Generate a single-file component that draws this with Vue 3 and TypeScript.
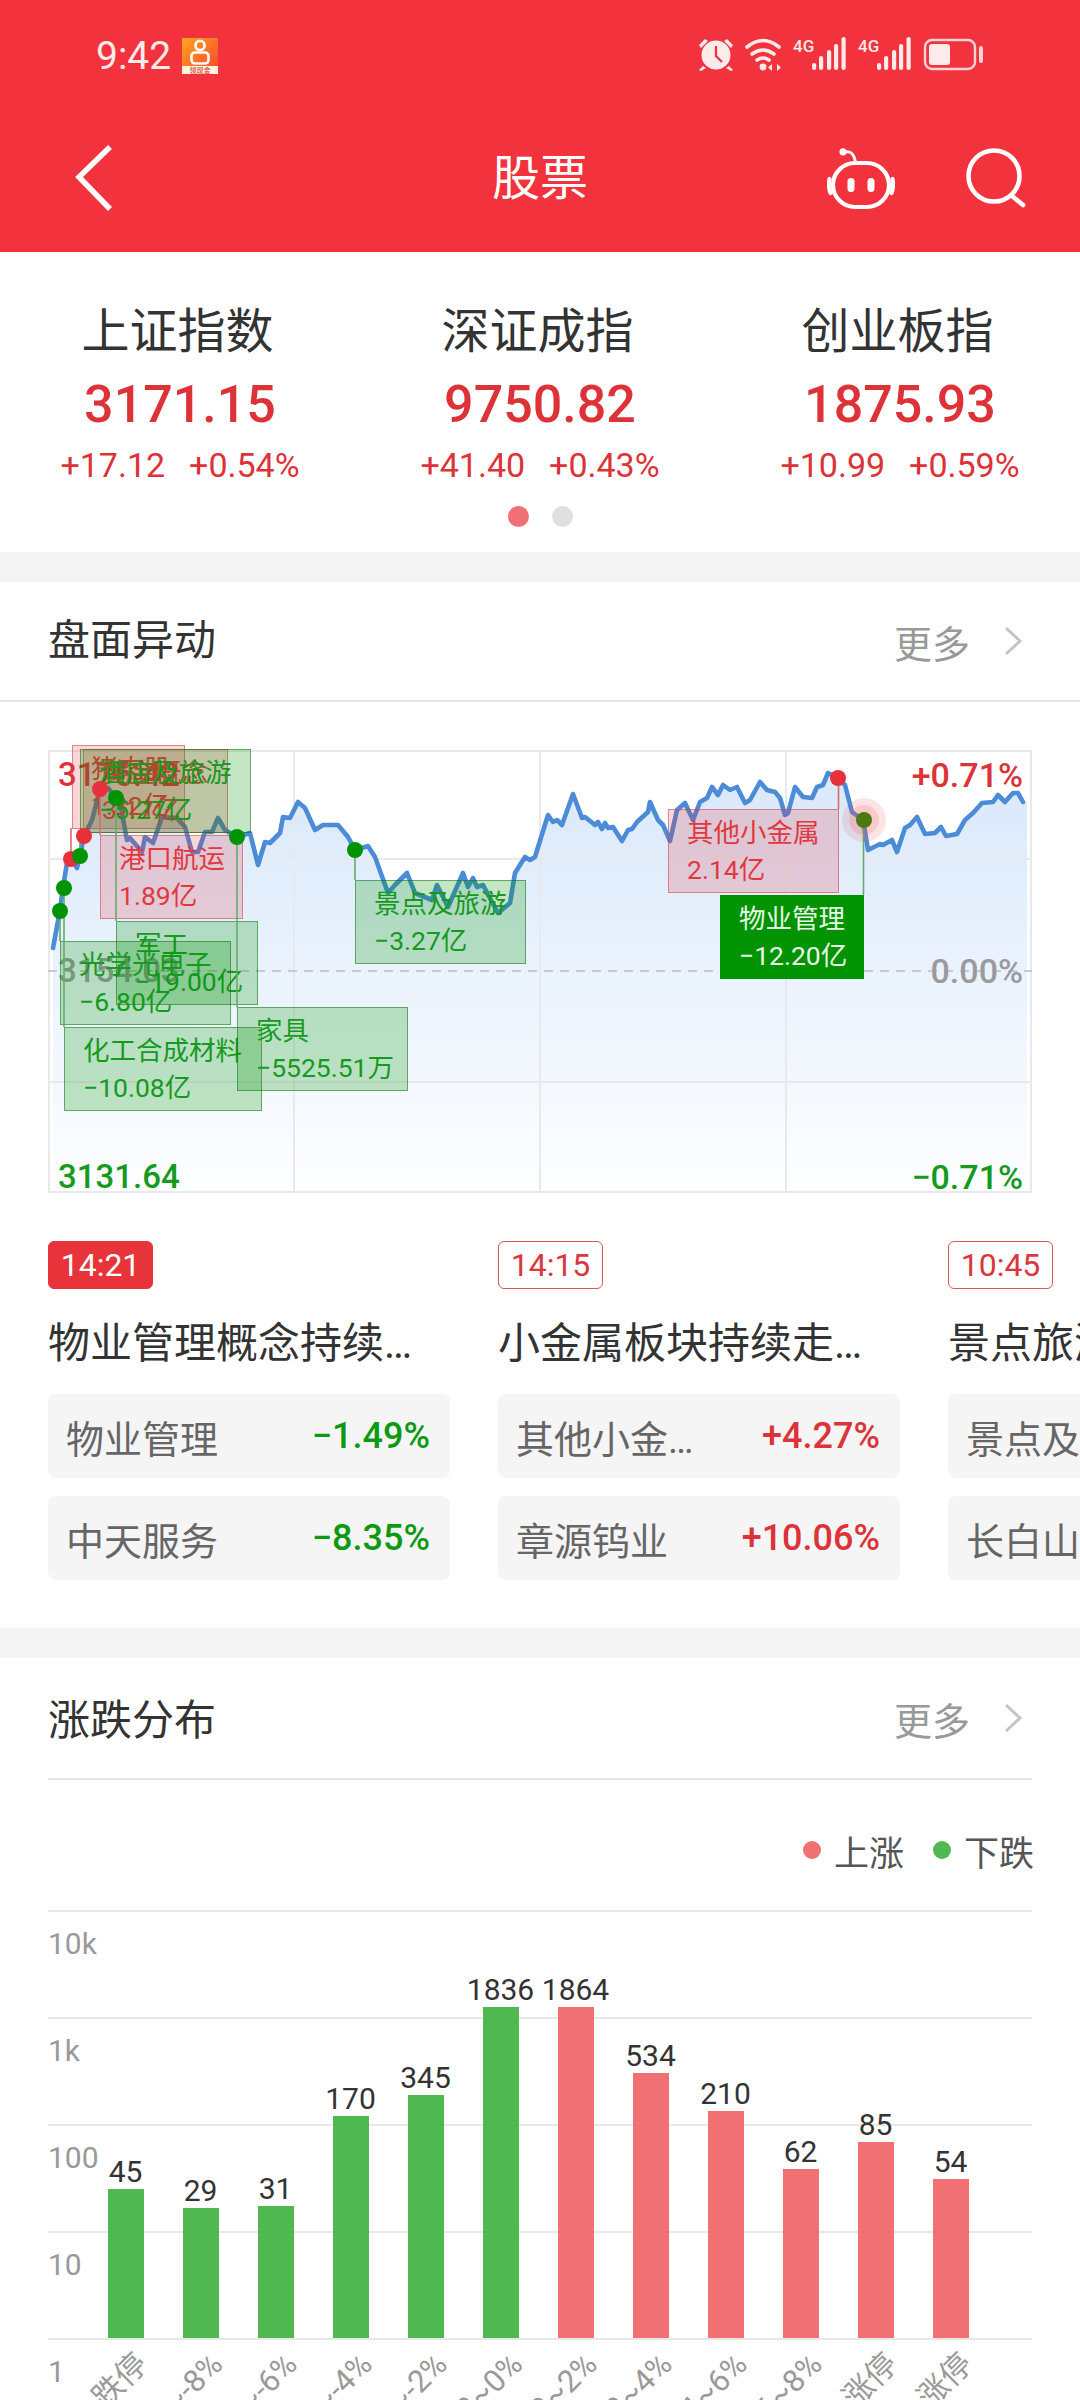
<script setup lang="ts">
type Tone = 'up' | 'down'

const indices = [
  { name: '上证指数', value: '3171.15', diff: '+17.12', pct: '+0.54%' },
  { name: '深证成指', value: '9750.82', diff: '+41.40', pct: '+0.43%' },
  { name: '创业板指', value: '1875.93', diff: '+10.99', pct: '+0.59%' },
]

const line: [number, number][] = [
  [53,948],[60,910],[63,887],[67,863],[71,858],[77,868],[80,856],[84,836],[92,820],[100,789],[108,788],[116,798],[120,803],
  [127,840],[130,838],[142,852],[145,837],[153,843],[162,817],[177,818],[185,827],[192,852],[198,852],[205,832],[212,832],
  [218,818],[225,830],[237,837],[250,833],[258,865],[265,842],[270,843],[280,833],[283,817],[290,818],[298,802],[305,808],
  [315,830],[323,825],[338,825],[348,837],[355,850],[368,846],[375,857],[388,893],[395,885],[407,873],[415,893],[432,900],
  [437,885],[448,907],[463,873],[468,887],[473,878],[477,887],[483,885],[498,913],[510,903],[515,873],[525,857],[530,860],
  [535,857],[548,815],[553,822],[557,820],[562,825],[573,794],[582,818],[585,817],[595,825],[598,822],[602,829],[605,823],
  [608,828],[613,827],[622,841],[628,830],[632,829],[637,822],[648,812],[650,802],[658,820],[663,825],[670,841],[677,810],
  [685,803],[693,820],[700,802],[707,798],[712,787],[718,795],[723,785],[730,790],[737,787],[745,803],[750,800],[760,782],
  [767,790],[775,792],[780,798],[785,815],[788,813],[795,787],[803,797],[812,798],[817,787],[823,785],[828,773],[838,778],
  [845,785],[852,812],[863,820],[868,850],[880,844],[883,845],[892,840],[897,852],[905,828],[910,825],[917,817],[925,834],
  [935,833],[941,827],[946,836],[957,834],[965,820],[973,813],[982,803],[993,802],[998,795],[1005,802],[1013,793],[1018,793],[1023,802],
]
const linePoints = line.map((p) => p.join(',')).join(' ')
const areaPoints = `${linePoints} 1027,802 1027,1192 53,1192`

const notes: { x: number; y: number; w: number; name: string; val: string; tone: Tone; solid?: boolean }[] = [
  { x: 72, y: 745, w: 113, name: '猪肉股', val: '1.32亿', tone: 'up' },
  { x: 83, y: 749, w: 145, name: '黄金概念', val: '3.17亿', tone: 'up' },
  { x: 80, y: 749, w: 171, name: '酒店及旅游', val: '−5.27亿', tone: 'down' },
  { x: 100, y: 835, w: 143, name: '港口航运', val: '1.89亿', tone: 'up' },
  { x: 116, y: 921, w: 142, name: '军工', val: '−19.00亿', tone: 'down' },
  { x: 60, y: 941, w: 171, name: '光学光电子', val: '−6.80亿', tone: 'down' },
  { x: 64, y: 1027, w: 198, name: '化工合成材料', val: '−10.08亿', tone: 'down' },
  { x: 237, y: 1007, w: 171, name: '家具', val: '−5525.51万', tone: 'down' },
  { x: 355, y: 880, w: 171, name: '景点及旅游', val: '−3.27亿', tone: 'down' },
  { x: 668, y: 809, w: 171, name: '其他小金属', val: '2.14亿', tone: 'up' },
  { x: 720, y: 895, w: 144, name: '物业管理', val: '−12.20亿', tone: 'down', solid: true },
]

const stems: { x: number; y1: number; y2: number; tone: Tone }[] = [
  { x: 71, y1: 828, y2: 858, tone: 'up' },
  { x: 100, y1: 789, y2: 835, tone: 'up' },
  { x: 84, y1: 833, y2: 836, tone: 'up' },
  { x: 838.5, y1: 778, y2: 809, tone: 'up' },
  { x: 60, y1: 910, y2: 941, tone: 'down' },
  { x: 64, y1: 887, y2: 1027, tone: 'down' },
  { x: 80, y1: 833, y2: 856, tone: 'down' },
  { x: 116, y1: 798, y2: 921, tone: 'down' },
  { x: 237, y1: 836, y2: 1007, tone: 'down' },
  { x: 355, y1: 850, y2: 880, tone: 'down' },
  { x: 863.5, y1: 820, y2: 895, tone: 'down' },
]

const dots: { x: number; y: number; tone: Tone }[] = [
  { x: 71, y: 859, tone: 'up' },
  { x: 84, y: 836, tone: 'up' },
  { x: 100, y: 789, tone: 'up' },
  { x: 838, y: 778, tone: 'up' },
  { x: 60, y: 911, tone: 'down' },
  { x: 64, y: 888, tone: 'down' },
  { x: 80, y: 856, tone: 'down' },
  { x: 116, y: 798, tone: 'down' },
  { x: 237, y: 837, tone: 'down' },
  { x: 355, y: 850, tone: 'down' },
]

const cards = [
  { time: '14:21', active: true, title: '物业管理概念持续走低', rows: [
    { name: '物业管理', val: '−1.49%', tone: 'down' },
    { name: '中天服务', val: '−8.35%', tone: 'down' },
  ] },
  { time: '14:15', active: false, title: '小金属板块持续走强拉升', rows: [
    { name: '其他小金属', val: '+4.27%', tone: 'up' },
    { name: '章源钨业', val: '+10.06%', tone: 'up' },
  ] },
  { time: '10:45', active: false, title: '景点旅游概念持续走低', rows: [
    { name: '景点及旅游', val: '−1.32%', tone: 'down' },
    { name: '长白山', val: '−5.02%', tone: 'down' },
  ] },
]

const yTicks = ['10k', '1k', '100', '10', '1']
const bars: { val: number; h: number; label: string; tone: Tone }[] = [
  { val: 45, h: 149, label: '跌停', tone: 'down' },
  { val: 29, h: 130, label: '-10~-8%', tone: 'down' },
  { val: 31, h: 132, label: '-8~-6%', tone: 'down' },
  { val: 170, h: 222, label: '-6~-4%', tone: 'down' },
  { val: 345, h: 243, label: '-4~-2%', tone: 'down' },
  { val: 1836, h: 331, label: '-2~0%', tone: 'down' },
  { val: 1864, h: 331, label: '0~2%', tone: 'up' },
  { val: 534, h: 265, label: '2~4%', tone: 'up' },
  { val: 210, h: 227, label: '4~6%', tone: 'up' },
  { val: 62, h: 169, label: '6~8%', tone: 'up' },
  { val: 85, h: 196, label: '8%~涨停', tone: 'up' },
  { val: 54, h: 159, label: '涨停', tone: 'up' },
]
</script>

<template>
  <div class="page">
    <header class="top">
      <div class="status">
        <div class="status-left">
          <span class="clock">9:42</span>
          <svg class="app-icon" viewBox="0 0 36 36" width="36" height="36">
            <defs>
              <linearGradient id="appg" x1="0" y1="0" x2="1" y2="1">
                <stop offset="0" stop-color="#ffa51f" />
                <stop offset="1" stop-color="#f8432c" />
              </linearGradient>
            </defs>
            <rect width="36" height="36" fill="url(#appg)" />
            <circle cx="18" cy="7.5" r="4.6" fill="none" stroke="#fff" stroke-width="2.6" />
            <rect x="9.5" y="14.5" width="17" height="11" rx="3.5" fill="none" stroke="#fff" stroke-width="2.6" />
            <rect x="0" y="28" width="36" height="8" fill="#fff3dc" />
            <text x="18" y="35" text-anchor="middle" class="app-text">领现金</text>
          </svg>
        </div>
        <svg class="status-right" viewBox="698 36 285 36" width="285" height="36">
          <g fill="#fdeaea" stroke="none">
            <circle cx="716" cy="55" r="14.5" />
            <path d="M699 45l6-6 3 2-7 7zM733 45l-6-6-3 2 7 7z" />
            <path d="M703 66l-4 4 2 1 5-3zM729 66l4 4-2 1-5-3z" />
          </g>
          <path d="M716 46v10l6 6" fill="none" stroke="#f2323c" stroke-width="2.2" />
          <g fill="none" stroke="#fdeaea" stroke-width="3.6" stroke-linecap="round">
            <path d="M747 47q16-13 32 0" />
            <path d="M752 54q11-8 22 0" />
            <path d="M757 60q6-4 12 0" />
          </g>
          <circle cx="763" cy="67" r="3.4" fill="#fdeaea" />
          <path d="M772 64v7l-4-3.5zM777 64v7l4-3.5z" fill="#fdeaea" />
          <text x="793" y="52" class="net">4G</text>
          <text x="858" y="52" class="net">4G</text>
          <g fill="#fdeaea">
            <rect x="812" y="63" width="4.2" height="7" rx="2" />
            <rect x="819" y="56" width="4.2" height="14" rx="2" />
            <rect x="827" y="50" width="4.2" height="20" rx="2" />
            <rect x="834" y="44" width="4.2" height="26" rx="2" />
            <rect x="841.5" y="37" width="4.2" height="33" rx="2" />
            <rect x="877" y="63" width="4.2" height="7" rx="2" />
            <rect x="884" y="56" width="4.2" height="14" rx="2" />
            <rect x="892" y="50" width="4.2" height="20" rx="2" />
            <rect x="899" y="44" width="4.2" height="26" rx="2" />
            <rect x="906.5" y="37" width="4.2" height="33" rx="2" />
          </g>
          <rect x="925" y="40" width="50" height="29" rx="7" fill="none" stroke="#fbd3d5" stroke-width="2.4" />
          <rect x="929" y="44" width="21" height="21" rx="3" fill="#fdeaea" />
          <rect x="979" y="46" width="4" height="17" rx="2" fill="#fbd3d5" />
        </svg>
      </div>
      <nav class="nav">
        <svg class="nav-back" viewBox="0 0 40 70" width="40" height="70">
          <polyline points="35,3 4,33 35,65" fill="none" stroke="#fff" stroke-width="5.5" />
        </svg>
        <h1 class="nav-title">股票</h1>
        <div class="nav-tools">
          <svg viewBox="0 0 68 62" width="68" height="62">
            <g fill="none" stroke="#fff" stroke-width="4.2" stroke-linecap="round">
              <path d="M17 4c5-1 7 0 9 3s2 6 3 8" stroke-width="3" />
              <rect x="6" y="15" width="56" height="44" rx="22" />
              <path d="M2.5 31q-1.5 7 1 14M65.5 31q1.500 7-1 14" />
            </g>
            <circle cx="16" cy="3.800" r="3.600" fill="#fff" />
            <rect x="20.500" y="30" width="7" height="14" rx="3.500" fill="#fff" />
            <rect x="40.500" y="30" width="7" height="14" rx="3.500" fill="#fff" />
          </svg>
          <svg viewBox="0 0 62 62" width="62" height="62">
            <circle cx="29" cy="28" r="25.5" fill="none" stroke="#fff" stroke-width="4.6" />
            <path d="M47 48l11 9" fill="none" stroke="#fff" stroke-width="4.6" stroke-linecap="round" />
          </svg>
        </div>
      </nav>
    </header>

    <section class="indices">
      <div class="index-grid">
        <div v-for="i in indices" :key="i.name" class="index">
          <div class="index-name">{{ i.name }}</div>
          <div class="index-value">{{ i.value }}</div>
          <div class="index-change"><span>{{ i.diff }}</span><span>{{ i.pct }}</span></div>
        </div>
      </div>
      <div class="pager"><i class="on"></i><i></i></div>
    </section>

    <div class="band"></div>

    <section>
      <div class="head head-full">
        <h2>盘面异动</h2>
        <div class="more">
          <span>更多</span>
          <svg viewBox="0 0 20 30" width="20" height="30"><polyline points="3,2 17,15 3,28" fill="none" stroke="#c4c4c4" stroke-width="3" /></svg>
        </div>
      </div>

      <div class="chart">
        <svg class="chart-svg" viewBox="48 750 984 443" width="984" height="443">
          <defs>
            <linearGradient id="area" gradientUnits="userSpaceOnUse" x1="0" y1="770" x2="0" y2="1192">
              <stop offset="0" stop-color="#d9e8fb" />
              <stop offset="1" stop-color="#fdfeff" />
            </linearGradient>
          </defs>
          <polygon :points="areaPoints" fill="url(#area)" />
          <g stroke="#e9e9ec" stroke-width="2" fill="none">
            <rect x="49" y="751" width="982" height="441" />
            <line x1="294" y1="750" x2="294" y2="1192" />
            <line x1="540" y1="750" x2="540" y2="1192" />
            <line x1="786" y1="750" x2="786" y2="1192" />
            <line x1="48" y1="859" x2="1032" y2="859" />
            <line x1="48" y1="1082" x2="1032" y2="1082" />
          </g>
          <line x1="48" y1="971" x2="1032" y2="971" stroke="#bdbdc2" stroke-width="1.6" stroke-dasharray="9 7" />
          <polyline :points="linePoints" fill="none" stroke="#4b8bd8" stroke-width="4.6" stroke-linejoin="round" stroke-linecap="round" />
        </svg>

        <span class="axis up al-top">3176.42</span>
        <span class="axis mid al-mid">3154.03</span>
        <span class="axis down al-bot">3131.64</span>
        <span class="axis up ar-top">+0.71%</span>
        <span class="axis mid ar-mid">0.00%</span>
        <span class="axis down ar-bot">−0.71%</span>

        <div
          v-for="n in notes"
          :key="n.name"
          class="note"
          :class="[n.tone, { solid: n.solid }]"
          :style="{ left: n.x - 48 + 'px', top: n.y - 750 + 'px', width: n.w + 'px' }"
        >
          <span>{{ n.name }}</span>
          <span>{{ n.val }}</span>
        </div>

        <svg class="chart-svg" viewBox="48 750 984 443" width="984" height="443">
          <line
            v-for="(s, k) in stems"
            :key="k"
            :x1="s.x"
            :x2="s.x"
            :y1="s.y1"
            :y2="s.y2"
            :stroke="s.tone === 'up' ? '#dd6a72' : '#62ad6b'"
            stroke-width="1.6"
          />
          <circle v-for="(d, k) in dots" :key="k" :cx="d.x" :cy="d.y" r="8" :fill="d.tone === 'up' ? '#e8303a' : '#019301'" />
          <circle cx="864" cy="820" r="22" fill="#f0555a" fill-opacity="0.16" />
          <circle cx="864" cy="820" r="15" fill="#f0555a" fill-opacity="0.18" />
          <circle cx="864" cy="820" r="8" fill="#4b7a12" />
        </svg>
      </div>

      <div class="cards">
        <article v-for="c in cards" :key="c.time" class="card">
          <span class="tag" :class="{ on: c.active }">{{ c.time }}</span>
          <h3 class="card-title">{{ c.title }}</h3>
          <div v-for="r in c.rows" :key="r.name" class="row">
            <span class="row-name">{{ r.name }}</span>
            <span class="row-val" :class="r.tone">{{ r.val }}</span>
          </div>
        </article>
      </div>
    </section>

    <div class="band band-2"></div>

    <section class="dist">
      <div class="head head-inset">
        <h2>涨跌分布</h2>
        <div class="more">
          <span>更多</span>
          <svg viewBox="0 0 20 30" width="20" height="30"><polyline points="3,2 17,15 3,28" fill="none" stroke="#c4c4c4" stroke-width="3" /></svg>
        </div>
      </div>

      <div class="legend">
        <i class="lg-up"></i><span>上涨</span>
        <i class="lg-down"></i><span>下跌</span>
      </div>

      <div class="plot">
        <div v-for="t in yTicks" :key="t" class="tick"><span>{{ t }}</span></div>
        <div class="bars">
          <div v-for="b in bars" :key="b.label" class="col">
            <span class="col-val">{{ b.val }}</span>
            <div class="bar" :class="b.tone" :style="{ height: b.h + 'px' }"></div>
            <span class="col-label">{{ b.label }}</span>
          </div>
        </div>
      </div>
    </section>
  </div>
</template>

<style scoped>
.page {
  position: relative;
  width: 1080px;
  height: 2400px;
  overflow: hidden;
  background: #fff;
  color: #333;
  font-family: Roboto, "Noto Sans CJK SC", sans-serif;
}
h1, h2, h3 { margin: 0; font-weight: 400; }

.top { height: 252px; background: #f2323c; color: #fff; }
.status {
  height: 106px;
  padding: 36px 97px 0 96px;
  box-sizing: border-box;
  display: flex;
  justify-content: space-between;
  align-items: flex-start;
}
.status-left { display: flex; align-items: center; gap: 11px; }
.clock { font-size: 39px; line-height: 40px; color: #fdeaea; }
.app-icon, .status-right { display: block; }
.app-text { font: 500 7px "Noto Sans CJK SC", sans-serif; fill: #d8443a; }
.net { font: 500 17px Roboto, sans-serif; fill: #fdeaea; }
.nav {
  height: 146px;
  padding: 0 53px;
  display: grid;
  grid-template-columns: 1fr auto 1fr;
  align-items: center;
}
.nav-back { display: block; margin-left: 22px; }
.nav-title { font-size: 48px; line-height: 60px; }
.nav-tools { display: flex; justify-content: flex-end; align-items: center; gap: 70px; }
.nav-tools svg { display: block; }

.indices { height: 300px; padding-top: 55px; box-sizing: border-box; }
.index-grid { display: grid; grid-template-columns: repeat(3, 360px); }
.index { text-align: center; }
.index-name { font-size: 48px; line-height: 50px; color: #333; padding-right: 5px; }
.index-value { margin-top: 23px; font-size: 52px; line-height: 50px; font-weight: 500; color: #dc3238; }
.index-change {
  margin-top: 15px;
  font-size: 34px;
  line-height: 40px;
  color: #dc3238;
  display: flex;
  justify-content: center;
  gap: 24px;
}
.pager { margin-top: 21px; display: flex; justify-content: center; gap: 23px; }
.pager i { width: 21px; height: 21px; border-radius: 50%; background: #e0e0e0; }
.pager i.on { background: #f07075; }

.band { height: 30px; background: #f4f4f4; }
.band-2 { margin-top: 48px; }

.head {
  display: flex;
  justify-content: space-between;
  align-items: center;
}
.head h2 { font-size: 42px; line-height: 50px; color: #333; }
.head-full { height: 118px; padding: 0 57px 0 48px; border-bottom: 2px solid #e6e6e6; }
.head-inset { height: 120px; margin: 0 48px; padding-right: 9px; border-bottom: 2px solid #e6e6e6; }
.head-inset h2 { margin-top: 5px; }
.more { display: flex; align-items: center; gap: 33px; font-size: 38px; color: #999; }
.more svg { display: block; }

.chart { position: relative; width: 984px; height: 443px; margin: 48px 0 0 48px; }
.chart-svg { position: absolute; left: 0; top: 0; pointer-events: none; }
.axis { position: absolute; font-size: 33px; line-height: 36px; font-weight: 500; }
.axis.up { color: #dc3238; }
.axis.mid { color: #9a9a9e; }
.axis.down { color: #149a1c; }
.al-top { left: 10px; top: 7px; }
.al-mid { left: 10px; top: 203px; }
.al-bot { left: 10px; top: 409px; }
.ar-top { right: 9px; top: 7px; font-size: 34px; }
.ar-mid { right: 9px; top: 203px; font-size: 34px; }
.ar-bot { right: 9px; top: 409px; font-size: 34px; }

.note {
  position: absolute;
  height: 84px;
  box-sizing: border-box;
  padding: 0 0 0 18px;
  display: flex;
  flex-direction: column;
  justify-content: center;
  font-size: 26.5px;
  line-height: 37px;
  white-space: nowrap;
  border: 1px solid;
}
.note.up { color: #e0383e; background: rgba(224, 50, 60, 0.2); border-color: rgba(215, 60, 70, 0.55); }
.note.down { color: #149a1c; background: rgba(1, 147, 1, 0.23); border-color: rgba(1, 110, 1, 0.5); }
.note.solid { color: #e8f8e4; background: #019301; border-color: #019301; }

.cards {
  margin: 48px 0 0 48px;
  display: flex;
  gap: 48px;
  width: 1032px;
  overflow: hidden;
}
.card { flex: 0 0 402px; width: 402px; min-width: 0; }
.tag {
  display: block;
  width: 105px;
  height: 48px;
  box-sizing: border-box;
  border: 1px solid #d9565b;
  border-radius: 6px;
  color: #d8383e;
  font-size: 32px;
  line-height: 46px;
  text-align: center;
}
.tag.on { background: #e8333a; border-color: #e8333a; color: #fff; }
.card-title {
  margin-top: 30px;
  font-size: 42px;
  line-height: 50px;
  color: #333;
  white-space: nowrap;
  overflow: hidden;
  text-overflow: ellipsis;
}
.row {
  height: 84px;
  margin-top: 18px;
  padding: 0 20px 0 18px;
  background: #f5f5f5;
  border-radius: 8px;
  display: flex;
  justify-content: space-between;
  align-items: center;
}
.card-title + .row { margin-top: 25px; }
.row-name {
  max-width: 185px;
  font-size: 38px;
  color: #666;
  white-space: nowrap;
  overflow: hidden;
  text-overflow: ellipsis;
}
.row-val { font-size: 36px; font-weight: 500; }
.row-val.up { color: #dc3238; }
.row-val.down { color: #0c9a12; }

.legend {
  margin: 50px 46px 0 0;
  height: 40px;
  display: flex;
  justify-content: flex-end;
  align-items: center;
  font-size: 35px;
  color: #555;
}
.legend i { width: 18px; height: 18px; border-radius: 50%; margin-right: 13px; }
.legend span + i { margin-left: 29px; }
.lg-up { background: #f07073; }
.lg-down { background: #4fb850; }

.plot { position: relative; margin: 40px 48px 0; }
.tick { height: 107px; box-sizing: border-box; border-top: 2px solid #e8e8e8; padding-top: 14px; }
.tick span { font-size: 30px; line-height: 36px; color: #999; }
.bars {
  position: absolute;
  left: 40px;
  top: 0;
  height: 428px;
  display: flex;
  align-items: flex-end;
}
.col { position: relative; width: 75px; display: flex; flex-direction: column; align-items: center; }
.col-val { font-size: 30px; line-height: 34px; color: #333; }
.bar { width: 36px; }
.bar.up { background: #f07073; }
.bar.down { background: #4fb850; }
.col-label {
  position: absolute;
  top: 100%;
  right: 21px;
  margin-top: 6px;
  font-size: 31px;
  line-height: 30px;
  color: #999;
  white-space: nowrap;
  transform: rotate(-45deg);
  transform-origin: right center;
}
</style>

<style>
html, body { margin: 0; background: #fff; }
</style>
